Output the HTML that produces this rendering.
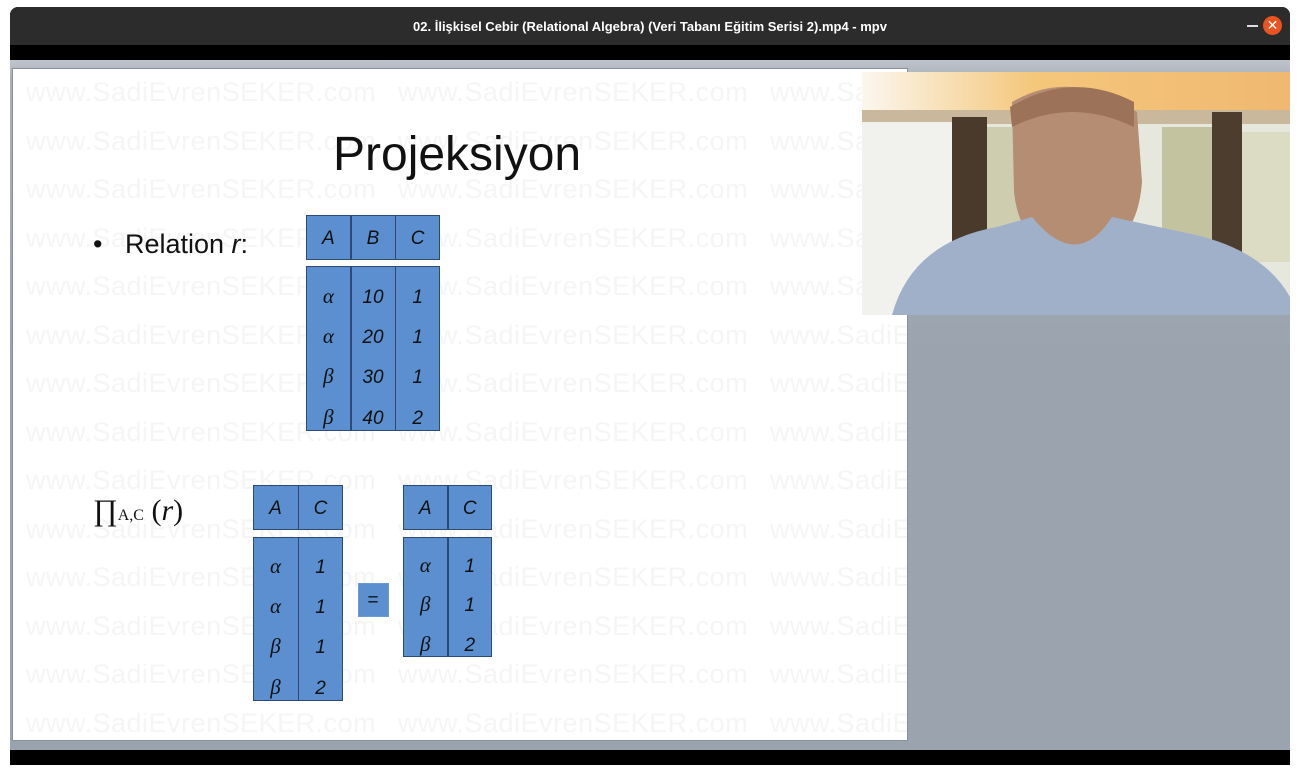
<!DOCTYPE html>
<html><head><meta charset="utf-8"><style>
*{margin:0;padding:0;box-sizing:border-box}
body{width:1300px;height:775px;background:#fff;position:relative;overflow:hidden;font-family:"Liberation Sans",sans-serif}
.abs{position:absolute}
#win{left:10px;top:7px;width:1280px;height:758px;background:#000;border-radius:8px 8px 0 0;overflow:hidden}
#title{left:0;top:0;width:1280px;height:38px;background:#2c2c2c;color:#fff;font-weight:bold;font-size:13px;text-align:center;line-height:40px}
#gray{left:0;top:53px;width:1280px;height:690px;background:linear-gradient(#bfc4cb 0px,#a9b0b9 20px,#9aa3ae 300px,#9aa3ae)}
#slide{left:12px;top:68px;width:896px;height:673px;background:#fff;border:1px solid #8a9098;overflow:hidden}
.wm{position:absolute;font-size:27px;color:#f5f5f5;white-space:nowrap;letter-spacing:0.5px}
.t{position:absolute;background:#5b8fcf;border:1.5px solid #2c4a73}
.c{position:absolute;font-family:"Liberation Serif",serif;font-style:italic;font-size:21px;color:#111;text-align:center}
.s{font-family:"Liberation Sans",sans-serif;font-size:19px}
.v{position:absolute;width:1.5px;background:#2c4a73}
</style></head><body>
<div id="win" class="abs">
<div id="title" class="abs">02. İlişkisel Cebir (Relational Algebra) (Veri Tabanı Eğitim Serisi 2).mp4 - mpv</div>
<div class="abs" style="left:1237px;top:18px;width:11px;height:1.5px;background:#ddd"></div>
<div class="abs" style="left:1253px;top:9px;width:19px;height:19px;border-radius:50%;background:#e95420;color:#fff;font-size:14px;text-align:center;line-height:19px">✕</div>
<div id="gray" class="abs"></div>
</div>
<div id="slide" class="abs">
<div id="wms"></div>
<div class="abs" style="left:320px;top:58px;font-size:48px;color:#111">Projeksiyon</div>
<div class="abs" style="left:80px;top:160px;font-size:27px;color:#111">•&nbsp;&nbsp;&nbsp;Relation <i>r</i>:</div>
<div class="abs" style="left:80px;top:425px;font-family:'Liberation Serif',serif;font-size:30px;color:#111">∏<span style="font-size:16px">A,C</span> (<i>r</i>)</div>
</div>
<div id="tables"></div>
<svg class="abs" style="left:862px;top:72px" width="428" height="243" viewBox="0 0 428 243">
<defs><linearGradient id="top" x1="0" x2="1"><stop offset="0" stop-color="#fbf7ef"/><stop offset=".4" stop-color="#f4c77b"/><stop offset="1" stop-color="#f0b870"/></linearGradient></defs>
<rect width="428" height="243" fill="#e6e8de"/>
<rect width="428" height="40" fill="url(#top)"/>
<rect y="38" width="428" height="14" fill="#c9b89c"/>
<rect x="0" y="50" width="100" height="193" fill="#f1f2ee"/>
<rect x="90" y="45" width="35" height="150" fill="#4a3a2c"/>
<rect x="350" y="40" width="30" height="150" fill="#4d3d2e"/>
<rect x="125" y="55" width="40" height="120" fill="#cfcdb0"/>
<rect x="300" y="55" width="50" height="120" fill="#c4c3a0"/>
<rect x="380" y="60" width="48" height="130" fill="#dcdbc4"/>
<path d="M150 30 Q210 -5 275 40 L280 110 Q275 180 215 185 Q158 180 152 120 Z" fill="#b58d72"/>
<path d="M148 35 Q210 -2 272 30 L272 55 Q210 25 150 55 Z" fill="#9c7258"/>
<path d="M30 243 Q50 170 135 155 L170 145 Q215 200 250 145 L320 160 Q400 175 428 225 L428 243 Z" fill="#9fb0c8"/>
</svg>
<script>
var w=document.getElementById('wms'),h='';
for(var r=0;r<14;r++)for(var c=0;c<3;c++)h+='<div class="wm" style="left:'+(13+c*372)+'px;top:'+(8+r*48.5)+'px">www.SadiEvrenSEKER.com</div>';
w.innerHTML=h;
function tbl(x,w,y,hh,cols,rows,ys,hy,hh2,hdr){var s='';
s+='<div class="t" style="left:'+x+'px;top:'+hy+'px;width:'+w+'px;height:'+hh2+'px"></div>';
s+='<div class="t" style="left:'+x+'px;top:'+y+'px;width:'+w+'px;height:'+hh+'px"></div>';
var cw=w/cols;
for(var i=1;i<cols;i++){s+='<div class="v" style="left:'+(x+cw*i-0.5)+'px;top:'+hy+'px;height:'+hh2+'px"></div><div class="v" style="left:'+(x+cw*i-0.5)+'px;top:'+y+'px;height:'+hh+'px"></div>';}
for(var i=0;i<cols;i++){s+='<div class="c s" style="left:'+(x+cw*i)+'px;width:'+cw+'px;top:'+(hy+hh2/2-10)+'px">'+hdr[i]+'</div>';
for(var j=0;j<rows.length;j++){var t=rows[j][i];var sans=/\d/.test(t);s+='<div class="c'+(sans?' s':'')+'" style="left:'+(x+cw*i)+'px;width:'+cw+'px;top:'+(ys[j]-(sans?9:12))+'px">'+t+'</div>';}}
return s;}
var H='';
H+=tbl(306,134,266,165,3,[['α','10','1'],['α','20','1'],['β','30','1'],['β','40','2']],[296,336,376,417],215,45,['A','B','C']);
H+=tbl(253,90,537,164,2,[['α','1'],['α','1'],['β','1'],['β','2']],[566,606,646,687],485,45,['A','C']);
H+=tbl(403,89,537,120,2,[['α','1'],['β','1'],['β','2']],[565,604,644],485,45,['A','C']);
H+='<div class="t" style="left:358px;top:583px;width:31px;height:34px;border-color:#6d9ad3"><div class="c s" style="left:0;width:28px;top:6px;font-style:normal">=</div></div>';
document.getElementById('tables').innerHTML=H;
</script>
</body></html>
